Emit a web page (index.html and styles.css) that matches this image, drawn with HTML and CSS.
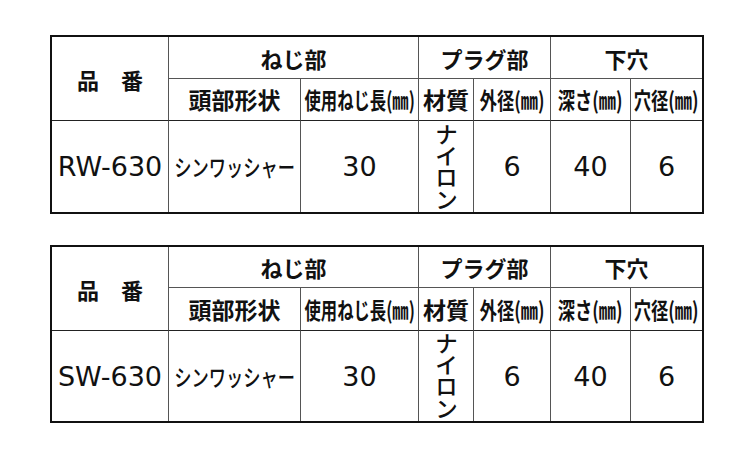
FILE: index.html
```html
<!DOCTYPE html>
<html lang="ja">
<head>
<meta charset="utf-8">
<title>仕様表</title>
<link rel="stylesheet" href="styles.css">
</head>
<body>
<div class="page">
  <table class="spec">
    <colgroup>
      <col class="c1"><col class="c2"><col class="c3"><col class="c4"><col class="c5"><col class="c6"><col class="c7">
    </colgroup>
    <tr class="r1">
      <td rowspan="2" class="h1 hb">品　番</td>
      <td colspan="2" class="h1">ねじ部</td>
      <td colspan="2" class="h1">プラグ部</td>
      <td colspan="2" class="h1 last">下穴</td>
    </tr>
    <tr class="r2">
      <td class="h2"><div class="c"><span>頭部形状</span></div></td>
      <td class="h2"><div class="c"><span class="s71">使用ねじ長(㎜)</span></div></td>
      <td class="h2"><div class="c"><span>材質</span></div></td>
      <td class="h2"><div class="c"><span class="s75">外径(㎜)</span></div></td>
      <td class="h2"><div class="c"><span class="s75">深さ(㎜)</span></div></td>
      <td class="h2 last"><div class="c"><span class="s75">穴径(㎜)</span></div></td>
    </tr>
    <tr class="r3">
      <td class="num">RW-630</td>
      <td class="kana"><div class="c"><span class="s75">シンワッシャー</span></div></td>
      <td class="num">30</td>
      <td class="kana"><span class="vert">ナイロン</span></td>
      <td class="num">6</td>
      <td class="num">40</td>
      <td class="num last">6</td>
    </tr>
  </table>

  <table class="spec second">
    <colgroup>
      <col class="c1"><col class="c2"><col class="c3"><col class="c4"><col class="c5"><col class="c6"><col class="c7">
    </colgroup>
    <tr class="r1">
      <td rowspan="2" class="h1 hb">品　番</td>
      <td colspan="2" class="h1">ねじ部</td>
      <td colspan="2" class="h1">プラグ部</td>
      <td colspan="2" class="h1 last">下穴</td>
    </tr>
    <tr class="r2">
      <td class="h2"><div class="c"><span>頭部形状</span></div></td>
      <td class="h2"><div class="c"><span class="s71">使用ねじ長(㎜)</span></div></td>
      <td class="h2"><div class="c"><span>材質</span></div></td>
      <td class="h2"><div class="c"><span class="s75">外径(㎜)</span></div></td>
      <td class="h2"><div class="c"><span class="s75">深さ(㎜)</span></div></td>
      <td class="h2 last"><div class="c"><span class="s75">穴径(㎜)</span></div></td>
    </tr>
    <tr class="r3">
      <td class="num">SW-630</td>
      <td class="kana"><div class="c"><span class="s75">シンワッシャー</span></div></td>
      <td class="num">30</td>
      <td class="kana"><span class="vert">ナイロン</span></td>
      <td class="num">6</td>
      <td class="num">40</td>
      <td class="num last">6</td>
    </tr>
  </table>
</div>
</body>
</html>
```
FILE: styles.css
```css
html, body {
  margin: 0;
  padding: 0;
  background: #fff;
}
.page {
  padding: 35px 0 0 50px;
  font-family: "Noto Sans CJK JP", sans-serif;
  color: #111;
}
.spec {
  border: 2px solid #111;
  border-spacing: 0;
  border-collapse: separate;
  table-layout: fixed;
  width: 654px;
  margin-bottom: 31px;
}
.c1 { width: 117px; }
.c2 { width: 132px; }
.c3 { width: 118px; }
.c4 { width: 55px; }
.c5 { width: 77px; }
.c6 { width: 80px; }
.c7 { width: 71px; }

.spec td {
  padding: 0;
  box-sizing: border-box;
  text-align: center;
  vertical-align: middle;
  border-right: 1px solid #555;
  white-space: nowrap;
  overflow: visible;
}
.spec td.last { border-right: none; }
.r1 td { height: 42px; border-bottom: 1px solid #555; }
.r1 td.hb { border-bottom: 1px solid #222; }
.r2 td { height: 42px; border-bottom: 1px solid #222; }
.r3 td { height: 91px; }
.second .r1 td { height: 41px; }
.second .r1 td.hb { height: 41px; }
.second .r2 td { height: 43px; }
.second .r3 td { height: 90px; }

.h1 {
  font-size: 22px;
  font-weight: 700;
  line-height: 1;
}
.h2 {
  font-size: 23px;
  font-weight: 700;
  line-height: 1;
}
.c {
  display: flex;
  justify-content: center;
  align-items: center;
}
.c span { display: inline-block; white-space: nowrap; }
.s71 { transform: scaleX(0.71); }
.s75 { transform: scaleX(0.75); }

.num {
  font-family: "DejaVu Sans", sans-serif;
  font-size: 27px;
  font-weight: 400;
  line-height: 1;
}
.kana {
  font-size: 23px;
  font-weight: 500;
  line-height: 1;
}
.vert {
  display: inline-block;
  writing-mode: vertical-rl;
  line-height: 23px;
  letter-spacing: -1.5px;
}
```
